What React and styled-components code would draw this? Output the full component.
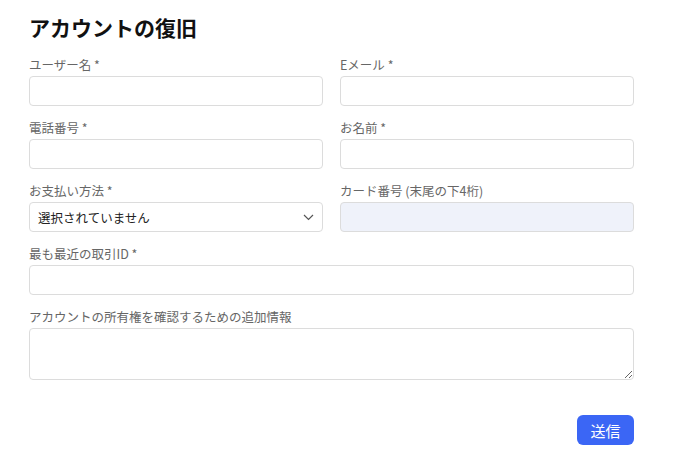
import React from 'react';
import styled, { createGlobalStyle } from 'styled-components';

const GlobalStyle = createGlobalStyle`
  body {
    margin: 0;
    background: #ffffff;
    font-family: "Noto Sans CJK JP", "Noto Sans", sans-serif;
  }
  * { box-sizing: border-box; }
`;

const Page = styled.div`
  width: 680px;
  padding: 13px 46px 0 29px;
`;

const Title = styled.h1`
  margin: 0 0 16px;
  font-size: 21px;
  line-height: 28px;
  font-weight: 700;
  color: #111;
`;

const Grid = styled.div`
  display: grid;
  grid-template-columns: 1fr 1fr;
  column-gap: 17px;
  row-gap: 14px;
`;

const Field = styled.div`
  display: flex;
  flex-direction: column;
  gap: 3px;
  grid-column: ${p => (p.$wide ? '1 / 3' : 'auto')};
`;

const Label = styled.label`
  font-size: 12.5px;
  line-height: 16px;
  color: #666;
`;

const Input = styled.input`
  height: 30px;
  border: 1px solid #dcdcdc;
  border-radius: 4px;
  background: ${p => (p.disabled ? '#eff2fa' : '#fff')};
  font: inherit;
  font-size: 13px;
  padding: 0 8px;
  outline: none;
`;

const SelectBox = styled.div`
  position: relative;
  height: 30px;
  border: 1px solid #dcdcdc;
  border-radius: 4px;
  display: flex;
  align-items: center;
  justify-content: space-between;
  padding: 0 8px;
  font-size: 12.5px;
  color: #222;
`;

const TextArea = styled.textarea`
  height: 52px;
  border: 1px solid #dcdcdc;
  border-radius: 4px;
  font: inherit;
  resize: vertical;
  outline: none;
`;

const Actions = styled.div`
  display: flex;
  justify-content: flex-end;
  margin-top: 35px;
`;

const Submit = styled.button`
  height: 30px;
  width: 57px;
  border: none;
  border-radius: 6px;
  background: #3b66f5;
  color: #fff;
  font-family: inherit;
  font-size: 15px;
  cursor: pointer;
`;

const Chevron = () => (
  <svg width="11" height="7" viewBox="0 0 11 7" fill="none">
    <path d="M1 1l4.5 4.5L10 1" stroke="#555" strokeWidth="1.2" />
  </svg>
);

export default function App() {
  return (
    <Page>
      <GlobalStyle />
      <Title>アカウントの復旧</Title>
      <Grid>
        <Field>
          <Label>ユーザー名 *</Label>
          <Input />
        </Field>
        <Field>
          <Label>Eメール *</Label>
          <Input />
        </Field>
        <Field>
          <Label>電話番号 *</Label>
          <Input />
        </Field>
        <Field>
          <Label>お名前 *</Label>
          <Input />
        </Field>
        <Field>
          <Label>お支払い方法 *</Label>
          <SelectBox>
            <span>選択されていません</span>
            <Chevron />
          </SelectBox>
        </Field>
        <Field>
          <Label>カード番号 (末尾の下4桁)</Label>
          <Input disabled />
        </Field>
        <Field $wide>
          <Label>最も最近の取引ID *</Label>
          <Input />
        </Field>
        <Field $wide>
          <Label>アカウントの所有権を確認するための追加情報</Label>
          <TextArea />
        </Field>
      </Grid>
      <Actions>
        <Submit>送信</Submit>
      </Actions>
    </Page>
  );
}
